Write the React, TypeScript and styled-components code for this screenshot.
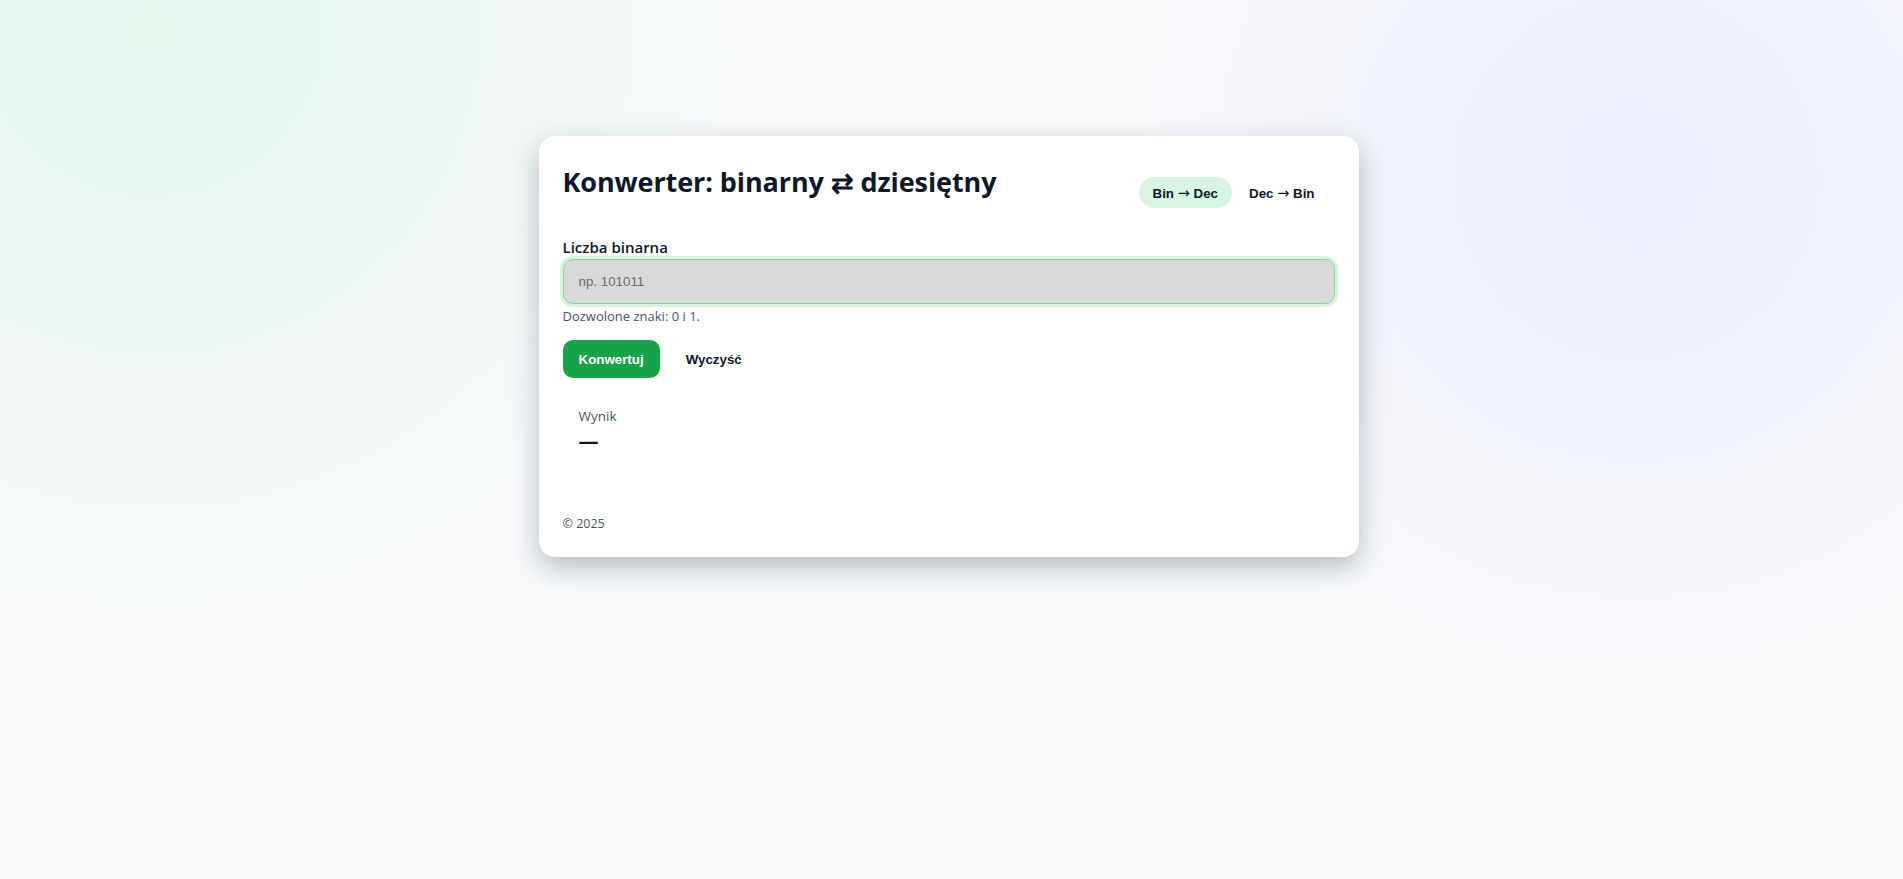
import React, { useState } from "react"
import styled, { createGlobalStyle, css } from "styled-components"

const GlobalStyle = createGlobalStyle`
  html, body {
    margin: 0;
    padding: 0;
  }

  body {
    min-height: 100vh;
    font-family: "Open Sans", "Noto Sans", sans-serif;
    color: #0f172a;
    background:
      radial-gradient(circle at 8% 3%, rgba(200, 240, 214, 0.38), rgba(200, 240, 214, 0) 30%),
      radial-gradient(circle at 86% 20%, rgba(228, 230, 252, 0.55), rgba(228, 230, 252, 0) 28%),
      #f8fafc;
  }
`

const Page = styled.div`
  min-height: 100vh;
  display: flex;
  justify-content: center;
  align-items: flex-start;
  padding: 136px 6px 0 0;
  box-sizing: border-box;
`

const Card = styled.main`
  width: 820px;
  box-sizing: border-box;
  padding: 24px;
  background: #ffffff;
  border-radius: 16px;
  box-shadow: 0 10px 28px rgba(15, 23, 42, 0.28);
`

const Header = styled.header`
  display: flex;
  justify-content: space-between;
  align-items: flex-start;
  margin-bottom: 29px;
`

const Title = styled.h1`
  margin: 0;
  padding-top: 5px;
  font-size: 27px;
  font-weight: 700;
  line-height: 1.25;
  letter-spacing: -0.1px;
  color: #0f172a;
`

const Tabs = styled.nav`
  display: flex;
  gap: 3px;
  margin-top: 17px;
  margin-right: 6px;
`

const Tab = styled.button<{ $active?: boolean }>`
  border: none;
  cursor: pointer;
  height: 31px;
  padding: 0 14px;
  border-radius: 999px;
  font-family: "Liberation Sans", Arial, sans-serif;
  font-size: 13.33px;
  font-weight: 700;
  color: #0f172a;
  background: transparent;

  ${props => props.$active && css`
    background: #d8f5e3;
  `}
`

const Arrow = styled.span`
  font-family: "DejaVu Sans", sans-serif;
  font-weight: 400;
  font-size: 14.5px;
`

const Label = styled.label`
  display: block;
  font-size: 15px;
  font-weight: 600;
  line-height: 20px;
  margin-bottom: 2px;
  color: #0f172a;
`

const Input = styled.input`
  display: block;
  width: 100%;
  height: 45px;
  box-sizing: border-box;
  padding: 0 15px;
  border: 1.5px solid #86d39e;
  border-radius: 10px;
  background: #d9d9d9;
  font-family: "Liberation Sans", Arial, sans-serif;
  font-size: 13.33px;
  color: #0f172a;
  outline: none;
  box-shadow: 0 0 0 3px #d6f5df;

  &::placeholder {
    color: #6b6b6b;
  }
`

const Hint = styled.p`
  margin: 3px 0 0;
  font-size: 13px;
  line-height: 18px;
  color: #4b5563;
`

const Actions = styled.div`
  display: flex;
  gap: 10px;
  margin-top: 15px;
`

const Button = styled.button<{ $primary?: boolean }>`
  height: 38px;
  padding: 0 16px;
  border: none;
  border-radius: 10px;
  cursor: pointer;
  font-family: "Liberation Sans", Arial, sans-serif;
  font-size: 13.33px;
  font-weight: 700;
  color: #0f172a;
  background: transparent;

  ${props => props.$primary && css`
    background: #16a34a;
    color: #ffffff;
  `}
`

const Result = styled.section`
  margin-top: 16px;
  padding: 12px 16px;
`

const ResultLabel = styled.div`
  font-size: 13.5px;
  line-height: 20px;
  color: #475569;
`

const ResultValue = styled.div`
  margin-top: 2px;
  font-size: 20px;
  font-weight: 700;
  line-height: 26px;
  color: #0f172a;
`

const Footer = styled.footer`
  margin-top: 49px;
  font-size: 12.5px;
  line-height: 18px;
  color: #4b5563;
`

export default function App(){
  const [ mode, setMode ] = useState<"bin" | "dec">("bin")
  const [ value, setValue ] = useState("")
  const [ result, setResult ] = useState("—")

  function convert(){
    if(mode === "bin"){
      setResult(/^[01]+$/.test(value) ? String(parseInt(value, 2)) : "—")
    } else {
      setResult(/^\d+$/.test(value) ? Number(value).toString(2) : "—")
    }
  }

  return (
    <>
      <GlobalStyle/>
      <Page>
        <Card>
          <Header>
            <Title>Konwerter: binarny ⇄ dziesiętny</Title>
            <Tabs>
              <Tab $active={mode === "bin"} onClick={() => setMode("bin")}>Bin <Arrow>→</Arrow> Dec</Tab>
              <Tab $active={mode === "dec"} onClick={() => setMode("dec")}>Dec <Arrow>→</Arrow> Bin</Tab>
            </Tabs>
          </Header>

          <Label htmlFor="number">{ mode === "bin" ? "Liczba binarna" : "Liczba dziesiętna" }</Label>
          <Input
            id="number"
            placeholder={ mode === "bin" ? "np. 101011" : "np. 43" }
            value={value}
            onChange={e => setValue(e.target.value)}
          />
          <Hint>{ mode === "bin" ? "Dozwolone znaki: 0 i 1." : "Dozwolone znaki: 0–9." }</Hint>

          <Actions>
            <Button $primary onClick={convert}>Konwertuj</Button>
            <Button onClick={() => { setValue(""); setResult("—") }}>Wyczyść</Button>
          </Actions>

          <Result>
            <ResultLabel>Wynik</ResultLabel>
            <ResultValue>{ result }</ResultValue>
          </Result>

          <Footer>© 2025</Footer>
        </Card>
      </Page>
    </>
  )
}
